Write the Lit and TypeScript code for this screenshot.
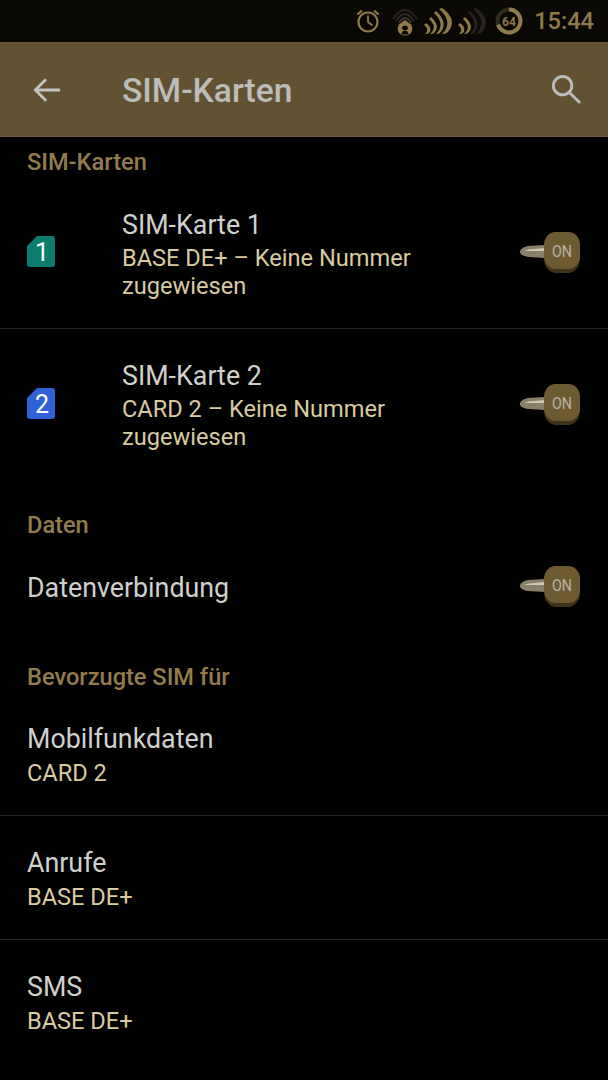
import { LitElement, html, css, svg } from 'lit';
import { customElement } from 'lit/decorators.js';

const crescents = [
  'M1 17Q7 21 2 26Q5 26 6 25Q10 20 3 15Z',
  'M6 11Q15 19 7 26Q10 26 11 25Q18 18 8 9Z',
  'M11 5Q23 16 13 26Q16 26 17 25Q26 15 13 3Z',
  'M16 1Q31 14 19 26Q22 26 24 25Q36 12 19 0Z',
];

const signal = (lit: number) => html`
  <svg class="signal" width="30" height="26" viewBox="0 0 30 26">
    ${crescents.map((d, i) => svg`<path d=${d} fill=${i < lit ? '#8f7a4c' : '#26231c'}></path>`)}
  </svg>
`;

const toggle = html`
  <svg class="toggle" width="62" height="42" viewBox="0 0 62 42">
    <path d="M1 19Q3 15 9 14L26 13V26L9 25Q3 24 1 21Z" fill="#8a7f68"></path>
    <path d="M5 19Q9 17 15 17L26 16V19H9Z" fill="#cfc8b4"></path>
    <path d="M35 3H51Q60 5 61 15V28Q60 38 51 41H35Q26 38 25 28V15Q26 5 35 3Z" fill="#3e3218"></path>
    <path d="M35 0H51Q60 2 61 12V25Q60 35 51 37H35Q26 35 25 25V12Q26 2 35 0Z" fill="#6e5a30"></path>
    <text x="43" y="25" text-anchor="middle" class="on" textLength="20" lengthAdjust="spacingAndGlyphs">ON</text>
  </svg>
`;

const simIcon = (n: number, color: string) => html`
  <svg class="sim" width="28" height="31" viewBox="0 0 28 31">
    <path d="M10 0H25Q28 0 28 3V28Q28 31 25 31H3Q0 31 0 28V10Z" fill=${color}></path>
    <text x="15" y="25" text-anchor="middle" class="sim-num">${n}</text>
  </svg>
`;

@customElement('app-root')
export class AppRoot extends LitElement {
  static styles = css`
    :host {
      display: block;
      width: 608px;
      height: 1080px;
      background: #000;
      overflow: hidden;
      font-family: Roboto, "Noto Sans", sans-serif;
      color: #d0d0cc;
    }
    .status {
      height: 42px;
      box-sizing: border-box;
      background: #0a0805;
      display: flex;
      align-items: center;
      justify-content: flex-end;
      padding-right: 14px;
      color: #8f7a4c;
    }
    .status svg { display: block; flex: none; }
    .alarm { margin-right: 11px; }
    .hotspot { margin-right: 5px; }
    .signal { margin-right: 4px; }
    .signal + .signal { margin-right: 8px; }
    .battery { margin-right: 11px; }
    .batt-num { font: 700 12px Roboto, sans-serif; fill: #8f7a4c; }
    .time { font-size: 23.6px; font-weight: 500; line-height: 42px; }
    .appbar {
      height: 95px;
      box-sizing: border-box;
      background: #635232;
      border-bottom: 1px solid #6f5d3a;
      display: flex;
      align-items: center;
      padding: 0 26px 0 33px;
      color: #bcbcb8;
    }
    .appbar svg { margin-top: 1px; }
    .appbar h1 {
      margin: 2px 0 0 61px;
      flex: 1;
      font-size: 33.6px;
      font-weight: 500;
    }
    .head {
      font-size: 23.6px;
      font-weight: 500;
      line-height: 30px;
      color: #937c4c;
      padding: 30px 27px 0;
    }
    .head.first { padding: 10px 27px 1px; }
    .row {
      display: flex;
      align-items: center;
      box-sizing: border-box;
      padding: 0 27px;
    }
    .sim-row {
      height: 151px;
      align-items: center;
    }
    .line { border-bottom: 1px solid #222; }
    .sim { flex: none; margin: 0 67px 3px 0; display: block; }
    .sim-num { font: 400 25px Roboto, sans-serif; fill: #fff; }
    .body { flex: 1; min-width: 0; }
    .title { font-size: 26.8px; line-height: 34px; }
    .sim-row .title { padding-top: 1px; }
    .sub { font-size: 23.6px; line-height: 28px; color: #d8cba2; margin-top: 2px; padding-right: 60px; }
    .toggle { flex: none; display: block; }
    .on { font: 400 17px Roboto, sans-serif; fill: #b9b5a6; }
    .data { height: 92px; }
    .data .toggle { margin-top: 1px; }
    .data .body { padding-top: 4px; }
    .pref { display: block; height: 124px; padding-top: 30px; }
    .pref .sub { line-height: 34px; margin-top: 0; }
  `;

  render() {
    return html`
      <div class="status">
        <svg class="alarm" width="26" height="26" viewBox="0 0 26 26" fill="none" stroke="#8f7a4c" stroke-width="2.200">
          <circle cx="13" cy="14" r="9.500"></circle>
          <path d="M13 7.500V14L17.500 17.500" stroke-width="1.800"></path>
          <path d="M2.500 6.500L7 2.500M23.500 6.500L19 2.500" stroke-width="2.200"></path>
        </svg>
        <svg class="hotspot" width="26" height="30" viewBox="0 0 26 30" fill="none">
          <path d="M1 13Q13 -5 25 13" stroke="#26231c" stroke-width="2"></path>
          <path d="M4 15Q13 1 22 15" stroke="#2c2820" stroke-width="2"></path>
          <path d="M7 17Q13 7 19 17" stroke="#3a3429" stroke-width="2"></path>
          <path d="M13 14L19 18.500Q22 24 18 28Q13 31 8 28Q4 24 7 18.500Z" fill="#8f7a4c"></path>
          <ellipse cx="13" cy="22" rx="2.800" ry="2.400" fill="#0a0805"></ellipse>
          <path d="M9 28.500L11 25H15L17 28.500Z" fill="#0a0805"></path>
        </svg>
        ${signal(4)}
        ${signal(2)}
        <svg class="battery" width="28" height="28" viewBox="0 0 28 28" fill="none">
          <circle cx="14" cy="14" r="11.500" stroke="#2f2a1f" stroke-width="4"></circle>
          <path d="M14 2.500A11.500 11.500 0 1 1 3.100 17.700" stroke="#8f7a4c" stroke-width="4"></path>
          <text x="14" y="18.500" text-anchor="middle" class="batt-num">64</text>
        </svg>
        <span class="time">15:44</span>
      </div>

      <div class="appbar">
        <svg width="28" height="28" viewBox="0 0 30 30" fill="none" stroke="#c4c4c0" stroke-width="3">
          <path d="M29 15H3M14 3.500L2.500 15L14 26.500"></path>
        </svg>
        <h1>SIM-Karten</h1>
        <svg width="31" height="31" viewBox="0 0 32 32" fill="none" stroke="#bcbcb8" stroke-width="3">
          <circle cx="12" cy="12" r="9.500"></circle>
          <path d="M19 19L30 30"></path>
        </svg>
      </div>

      <div class="head first">SIM-Karten</div>
      <div class="row sim-row line">
        ${simIcon(1, '#0b7c6d')}
        <div class="body">
          <div class="title">SIM-Karte 1</div>
          <div class="sub">BASE DE+ – Keine Nummer zugewiesen</div>
        </div>
        ${toggle}
      </div>
      <div class="row sim-row">
        ${simIcon(2, '#2f62d6')}
        <div class="body">
          <div class="title">SIM-Karte 2</div>
          <div class="sub">CARD 2 – Keine Nummer zugewiesen</div>
        </div>
        ${toggle}
      </div>

      <div class="head">Daten</div>
      <div class="row data">
        <div class="body"><div class="title">Datenverbindung</div></div>
        ${toggle}
      </div>

      <div class="head">Bevorzugte SIM für</div>
      <div class="row pref line">
        <div class="title">Mobilfunkdaten</div>
        <div class="sub">CARD 2</div>
      </div>
      <div class="row pref line">
        <div class="title">Anrufe</div>
        <div class="sub">BASE DE+</div>
      </div>
      <div class="row pref">
        <div class="title">SMS</div>
        <div class="sub">BASE DE+</div>
      </div>
    `;
  }
}
